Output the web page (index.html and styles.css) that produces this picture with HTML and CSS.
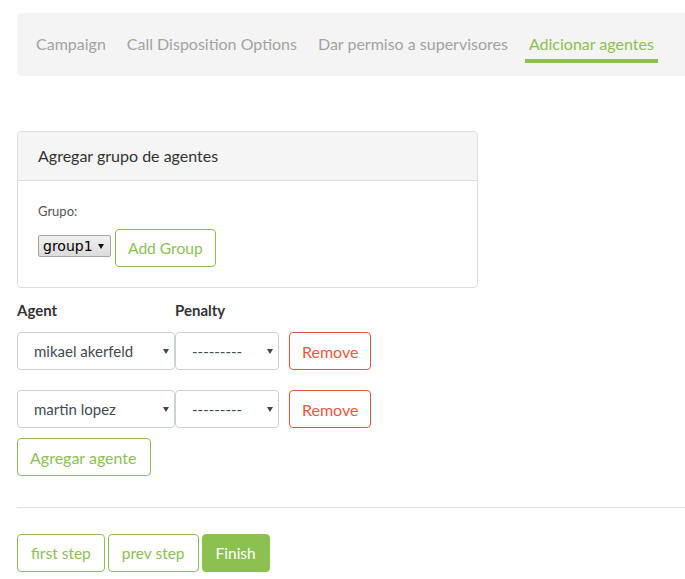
FILE: index.html
```html
<!DOCTYPE html>
<html>
<head>
<meta charset="utf-8">
<link rel="stylesheet" href="styles.css">
</head>
<body>
<div class="page">
  <nav class="steps">
    <span class="step">Campaign</span>
    <span class="step">Call Disposition Options</span>
    <span class="step">Dar permiso a supervisores</span>
    <span class="step active">Adicionar agentes</span>
  </nav>

  <section class="panel">
    <div class="panel-head">Agregar grupo de agentes</div>
    <div class="panel-body">
      <div class="field-label">Grupo:</div>
      <div class="group-row">
        <span class="native-wrap"><select class="native-select"><option>group1</option></select></span>
        <button class="btn btn-green">Add Group</button>
      </div>
    </div>
  </section>

  <div class="agent-head">
    <span class="col-agent">Agent</span>
    <span class="col-penalty">Penalty</span>
  </div>

  <div class="agent-row">
    <span class="sel-wrap agent"><select class="sel"><option>mikael akerfeld</option></select></span>
    <span class="sel-wrap penalty"><select class="sel sel-pen"><option>---------</option></select></span>
    <button class="btn btn-red">Remove</button>
  </div>
  <div class="agent-row">
    <span class="sel-wrap agent"><select class="sel"><option>martin lopez</option></select></span>
    <span class="sel-wrap penalty"><select class="sel sel-pen"><option>---------</option></select></span>
    <button class="btn btn-red">Remove</button>
  </div>
  <button class="btn btn-green add-agent">Agregar agente</button>

  <hr class="divider">

  <div class="footer">
    <button class="btn btn-green">first step</button>
    <button class="btn btn-green">prev step</button>
    <button class="btn btn-fill">Finish</button>
  </div>
</div>
</body>
</html>
```

FILE: styles.css
```css
html, body {
  margin: 0;
  padding: 0;
  background: #fff;
  overflow: hidden;
}
body {
  font-family: Lato, "Open Sans", sans-serif;
  color: #333;
}
.page {
  width: 668px;
  padding: 13px 0 0 17px;
}
.steps {
  display: flex;
  gap: 13px;
  background: #f4f4f4;
  border-radius: 5px 0 0 5px;
  padding: 0 15px 13px;
}
.step {
  padding: 20px 4px 4px;
  line-height: 22px;
  font-size: 16px;
  color: #a2a2a2;
  border-bottom: 4px solid transparent;
  white-space: nowrap;
}
.step.active {
  color: #8cc152;
  border-bottom-color: #8cc152;
}
.panel {
  margin-top: 55px;
  width: 459px;
  border: 1px solid #dddddd;
  border-radius: 4px;
}
.panel-head {
  height: 48px;
  line-height: 48px;
  padding-left: 20px;
  background: #f5f5f5;
  border-bottom: 1px solid #dddddd;
  border-radius: 4px 4px 0 0;
  font-size: 16px;
  color: #333;
}
.panel-body {
  padding: 20px 20px 20px;
}
.field-label {
  font-size: 13px;
  line-height: 20px;
  color: #555;
  margin-bottom: 8px;
}
.group-row {
  display: flex;
  align-items: flex-start;
  gap: 4px;
}
.native-wrap {
  position: relative;
  margin-top: 6px;
}
.native-wrap::after {
  content: "";
  position: absolute;
  right: 7px;
  top: 9px;
  border-left: 3px solid transparent;
  border-right: 3px solid transparent;
  border-top: 5px solid #111;
  pointer-events: none;
}
.native-select {
  appearance: none;
  -webkit-appearance: none;
  width: 73px;
  height: 22px;
  margin: 0;
  padding: 0 0 0 4px;
  font-family: "DejaVu Sans", sans-serif;
  font-size: 14px;
  color: #000;
  border: 1px solid #a6a6a6;
  border-radius: 2px;
  background: linear-gradient(#f0f0f0, #dcdcdc);
}
.btn {
  font-family: Lato, "Open Sans", sans-serif;
  font-size: 16px;
  height: 38px;
  padding: 0 12px;
  background: #fff;
  border-radius: 4px;
  cursor: pointer;
  white-space: nowrap;
}
.btn-green {
  border: 1px solid #8cc152;
  color: #8cc152;
}
.group-row .btn { font-size: 15.6px; }
.btn-red {
  border: 1px solid #e9573f;
  color: #e9573f;
  margin-left: 10px;
  padding: 0 12px;
}
.btn-fill {
  border: 1px solid #8cc152;
  background: #8cc152;
  color: #fff;
}
.agent-head {
  display: flex;
  margin-top: 12px;
  line-height: 20px;
  font-size: 15px;
  font-weight: bold;
  color: #333;
}
.col-agent { width: 158px; }
.agent-row {
  display: flex;
  margin-top: 12px;
}
.agent-row + .agent-row { margin-top: 20px; }
.sel-wrap {
  position: relative;
  display: block;
}
.sel-wrap::after {
  content: "";
  position: absolute;
  right: 6px;
  top: 17px;
  border-left: 3px solid transparent;
  border-right: 3px solid transparent;
  border-top: 5px solid #444;
  pointer-events: none;
}
.sel {
  appearance: none;
  -webkit-appearance: none;
  height: 38px;
  margin: 0;
  padding: 0 0 0 16px;
  font-family: Lato, "Open Sans", sans-serif;
  font-size: 15px;
  color: #434a54;
  background: #fff;
  border: 1px solid #ccd1d9;
  border-radius: 4px;
}
.agent .sel { width: 158px; }
.penalty .sel { width: 104px; }
.add-agent {
  margin-top: 10px;
  padding: 0 13px 0 12px;
}
.divider {
  margin: 31px 0 0;
  border: 0;
  border-top: 1px solid #e1e1e1;
}
.footer {
  display: flex;
  gap: 3px;
  margin-top: 26px;
}
.footer .btn {
  padding: 0 13px;
  font-size: 15.5px;
}
```
